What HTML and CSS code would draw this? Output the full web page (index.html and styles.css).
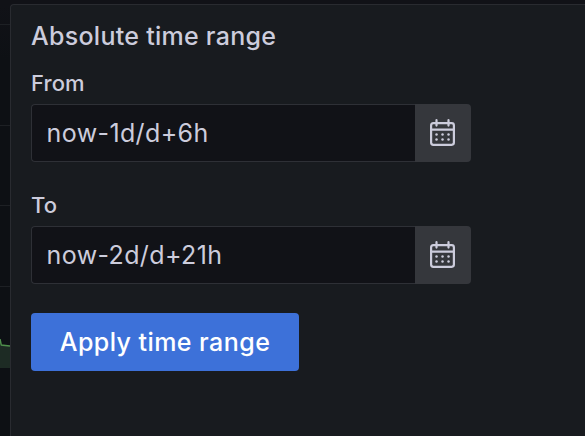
FILE: index.html
```html
<!DOCTYPE html>
<html lang="en"><head><meta charset="utf-8"><title>Absolute time range</title><link rel="stylesheet" href="styles.css"></head>
<body>
<svg width="0" height="0" class="defs"><defs><symbol id="calendar" viewBox="0 0 28 30"><path class="outline" d="M4.3 5.2H22.7Q24.9 5.2 24.9 7.5V24.6Q24.9 26.8 22.7 26.8H4.3Q2.1 26.8 2.1 24.6V7.5Q2.1 5.2 4.3 5.2ZM2.5 11.6H24.5M7.5 2.2V7.6M19.5 2.2V7.6"/><g class="dots"><circle cx="7.5" cy="16.6" r="1.25"/><circle cx="13.5" cy="16.6" r="1.25"/><circle cx="19.5" cy="16.6" r="1.25"/><circle cx="7.5" cy="21.5" r="1.25"/><circle cx="13.5" cy="21.5" r="1.25"/><circle cx="19.5" cy="21.5" r="1.25"/></g></symbol></defs></svg>
<div class="page">
<aside class="chart"><i></i><i></i><i></i><i></i><svg class="series" viewBox="0 0 10 30"><path class="area" d="M0 7H10V29H0z"/><path class="line" d="M0 0L1.2 6L10 7"/></svg></aside>
<main class="panel">
<h1>Absolute time range</h1>
<form>
<label for="from">From</label>
<div class="field"><input id="from" value="now-1d/d+6h"><button type="button" aria-label="From calendar"><svg class="icon"><use href="#calendar"/></svg></button></div>
<label for="to">To</label>
<div class="field"><input id="to" value="now-2d/d+21h"><button type="button" aria-label="To calendar"><svg class="icon"><use href="#calendar"/></svg></button></div>
<button class="apply" type="button">Apply time range</button>
</form>
</main>
</div>
</body></html>
```
FILE: styles.css
```css
* { box-sizing: border-box; }
body { margin: 0; overflow: hidden; background: #111217; font-family: Inter, sans-serif; color: #ccccdc; }
.defs { position: absolute; }
.page { display: flex; height: 436px; background: linear-gradient(#111217 0, #111217 5px, #0d1014 60px); }
.chart { width: 10px; flex: none; padding-top: 24px; }
.chart i { display: block; height: 80px; border-top: 1px solid #1d2024; }
.chart i:first-child { height: 101px; }
.chart i:nth-child(3) { height: 81px; }
.chart i:nth-child(4) { height: 53px; }
.series { display: block; width: 10px; height: 30px; }
.area { fill: #1d2b24; }
.line { fill: none; stroke: #4f8f4c; stroke-width: 1.5; }
.panel { flex: 1; margin-top: 4px; padding: 15px 20px; background: #181b1f; border: solid #292b30; border-width: 1px 0 0 1px; border-top-left-radius: 4px; }
h1 { margin: 0; font-size: 25px; font-weight: 450; line-height: 32px; letter-spacing: .27px; }
label { display: block; margin-top: 15px; height: 32px; font-size: 22px; font-weight: 500; line-height: 32px; letter-spacing: .1px; }
.field { display: flex; width: 440px; height: 58px; margin-top: 5px; }
.field + label { margin-top: 27px; }
input { width: 384px; border: 1px solid #2e3036; border-right: 0; border-radius: 4px 0 0 4px; background: #111217; color: #ccccdc; padding: 0 14.6px; font: 400 25px Inter, sans-serif; letter-spacing: .38px; outline: 0; }
.field button { display: grid; place-items: center; width: 56px; padding: 0; border: 0; border-radius: 0 4px 4px 0; background: #35373c; color: #ccccdc; }
.icon { width: 28px; height: 30px; }
.outline { fill: none; stroke: currentColor; stroke-width: 2.2; stroke-linecap: round; stroke-linejoin: round; }
.dots { fill: currentColor; }
.apply { display: block; width: 268px; height: 58px; margin-top: 29px; padding: 0; border: 0; border-radius: 4px; background: #3d71d9; color: #fff; font: 500 25px Inter, sans-serif; letter-spacing: .44px; }
```
